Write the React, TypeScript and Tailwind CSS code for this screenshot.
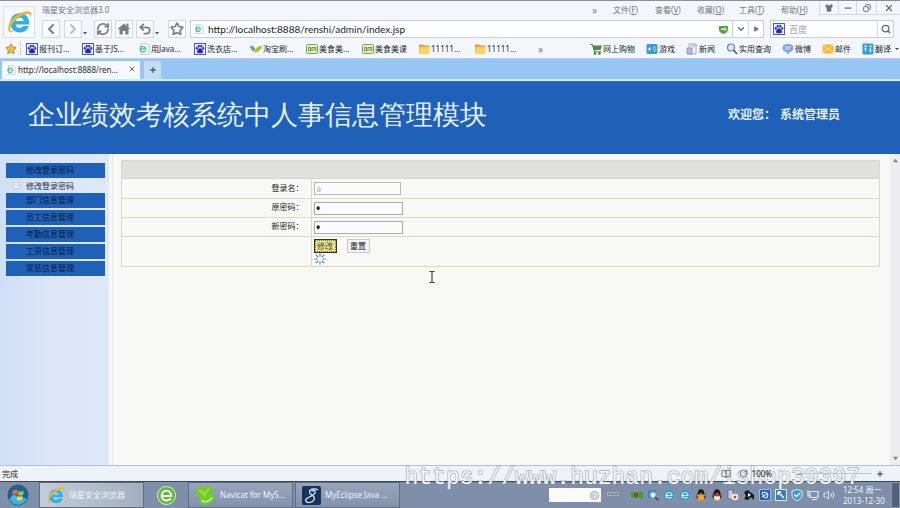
import type { ReactNode } from 'react';
import {
    BookOpen,
    ChevronDown,
    ChevronLeft,
    ChevronRight,
    Copy,
    Minus,
    Play,
    Plus,
    RotateCw,
    RefreshCw,
    Search,
    Shirt,
    Star,
    Undo2,
    Volume2,
    X,
} from 'lucide-react';

type IconName = 'baidu' | 'page' | 'leaf' | 'qm' | 'folder' | 'cart' | 'game' | 'news' | 'search' | 'weibo' | 'mail' | 'translate';

const bookmarks: { icon: IconName; label: string }[] = [
    { icon: 'baidu', label: '报刊订...' },
    { icon: 'baidu', label: '基于JS...' },
    { icon: 'page', label: '用Java...' },
    { icon: 'baidu', label: '洗衣店...' },
    { icon: 'leaf', label: '淘宝刷...' },
    { icon: 'qm', label: '美食美...' },
    { icon: 'qm', label: '美食美课' },
    { icon: 'folder', label: '11111...' },
    { icon: 'folder', label: '11111...' },
];

const shortcuts: { icon: IconName; label: string }[] = [
    { icon: 'cart', label: '网上购物' },
    { icon: 'game', label: '游戏' },
    { icon: 'news', label: '新闻' },
    { icon: 'search', label: '实用查询' },
    { icon: 'weibo', label: '微博' },
    { icon: 'mail', label: '邮件' },
    { icon: 'translate', label: '翻译' },
];

const menus = [
    ['文件', 'F'],
    ['查看', 'V'],
    ['收藏', 'O'],
    ['工具', 'T'],
    ['帮助', 'H'],
];

const modules = ['部门信息管理', '员工信息管理', '考勤信息管理', '工资信息管理', '奖惩信息管理'];

function BrowserLogo({ className }: { className?: string }) {
    return (
        <svg viewBox="0 0 24 24" className={className}>
            <path d="M21.500 14.200H8.800c.3 2 1.800 3.200 3.900 3.200 1.600 0 2.700-.6 3.400-1.700h4.900c-1.200 3.700-4.300 6-8.300 6C7.500 21.700 4 18.200 4 13s3.500-9 8.700-9c5.300 0 8.900 3.800 8.800 10.200zM8.900 11h7.500c-.3-1.800-1.700-2.900-3.700-2.900S9.300 9.200 8.900 11z" fill="#27b4e6" />
            <path d="M3 21C.5 18 3 10.800 9.500 6 15 2 21.500.8 23 3.300c.8 1.300.4 3.200-.8 5.200.4-1.700.3-2.800-.5-3.400-1.900-1.300-6.500.2-10.700 3.500C5.700 12.800 2.800 17.600 4.200 19.800c.5.800 1.700.9 3.300.5C5.500 21.600 3.900 22 3 21z" fill="#e9b63c" />
        </svg>
    );
}

function PageIcon({ className }: { className?: string }) {
    return (
        <svg viewBox="0 0 12 12" className={className}>
            <path d="M3 .5h6l2 2v9H3z" fill="#f7f9fa" stroke="#b3bec4" strokeWidth=".7" />
            <path d="M7.500 7.500a2.800 2.800 0 1 1 .3-1.600H2.800" fill="none" stroke="#43b9a0" strokeWidth="1.300" />
        </svg>
    );
}

function SiteIcon({ name }: { name: IconName }) {
    if (name === 'page') return <PageIcon className="size-3 shrink-0" />;
    return (
        <svg viewBox="0 0 12 12" className="size-3 shrink-0">
            {name === 'baidu' && (
                <>
                    <rect x=".5" y=".5" width="11" height="11" fill="#e9ecff" stroke="#4a58c8" />
                    <g fill="#2227c4">
                        <ellipse cx="2.800" cy="5.400" rx="1" ry="1.300" />
                        <ellipse cx="4.700" cy="3.200" rx="1" ry="1.400" />
                        <ellipse cx="7.300" cy="3.200" rx="1" ry="1.400" />
                        <ellipse cx="9.200" cy="5.400" rx="1" ry="1.300" />
                        <path d="M6 5.200c1.500 0 3 2.200 3 3.600S7.800 10.200 6 10.200 3 10.200 3 8.800 4.500 5.200 6 5.200z" />
                    </g>
                </>
            )}
            {name === 'leaf' && (
                <>
                    <path d="M0 3c3-1 5 1 5.500 5C3 9 .5 7 0 3z" fill="#5f9fb2" />
                    <path d="M5 9c0-4 3-6.500 7-6-1 4-3.500 6.500-7 6z" fill="#9ccb2e" />
                    <path d="M3 7c2 0 4 1 5 2-2 1.500-4 1-5-2z" fill="#efb93a" />
                </>
            )}
            {name === 'qm' && (
                <>
                    <rect x=".5" y="1.500" width="11" height="9" rx="1" fill="#e4eed0" stroke="#79a544" />
                    <path d="M2.500 4.500h2v3h-2zM4.500 8.500v-4M6 8V4.500h2V8M8 4.500h1.800V8" fill="none" stroke="#5d8d32" strokeWidth=".8" />
                </>
            )}
            {name === 'folder' && (
                <>
                    <path d="M1 1.500h4l1 1h5V11H1z" fill="#e2a13a" />
                    <path d="M1.500 4H12l-1 7H1z" fill="#fbd067" />
                </>
            )}
            {name === 'cart' && (
                <>
                    <path d="M0 1h2.500l.8 1.500H12L10.500 7H4.500L5 8.300h6v1H4L2 2H0z" fill="#4f8a45" />
                    <circle cx="5" cy="10.500" r="1.200" fill="#3c6f37" />
                    <circle cx="9.500" cy="10.500" r="1.200" fill="#3c6f37" />
                </>
            )}
            {name === 'game' && (
                <>
                    <rect x=".5" y="1" width="11" height="10" rx="1.500" fill="#3d9bd4" />
                    <path d="M2 6h3M3.500 4.500v3M8.500 3.500v1.500M8.500 7v1.500M7 6h.8M9.300 6h.8" stroke="#fff" strokeWidth="1.200" />
                </>
            )}
            {name === 'news' && (
                <>
                    <path d="M3 1h7v10H3z" fill="#eef1f7" stroke="#8b97b0" strokeWidth=".8" />
                    <path d="M1 5h5v6H1z" fill="#b3bdd4" stroke="#8390ac" strokeWidth=".8" />
                    <path d="M5 3h4" stroke="#8b97b0" strokeWidth=".8" />
                </>
            )}
            {name === 'search' && (
                <>
                    <circle cx="5" cy="4.500" r="3.500" fill="#dcebfa" stroke="#5b83b8" strokeWidth="1.200" />
                    <path d="m7.500 7 3.500 4" stroke="#51617c" strokeWidth="1.800" />
                </>
            )}
            {name === 'weibo' && (
                <>
                    <path d="M6 1c3.300 0 5.500 1.600 5.500 4S9.300 9 7.500 9.200L6 12 5 9.200C2.500 9 .5 7.500.5 5S2.700 1 6 1z" fill="#7ba6db" />
                    <path d="M3 4h6M3 6h5" stroke="#dfeafa" />
                </>
            )}
            {name === 'mail' && (
                <>
                    <rect x=".5" y="1.500" width="11" height="9" fill="#f5b731" />
                    <path d="m1 2 5 4.500L11 2M1 10l3.500-4M11 10 7.500 6" fill="none" stroke="#fff0bd" strokeWidth=".9" />
                </>
            )}
            {name === 'translate' && (
                <>
                    <rect x=".5" y=".5" width="11" height="11" rx="1" fill="#2f9bd3" />
                    <path d="M2 3h3M3.500 2v7M2 6h3M6.500 3h3.500L7 6M8.500 5v5M6.500 7.500h4" fill="none" stroke="#d5f0ff" strokeWidth=".9" />
                </>
            )}
        </svg>
    );
}

function ToolButton({ label, children }: { label: string; children: ReactNode }) {
    return (
        <button aria-label={label} className="flex h-[18px] w-[18px] items-center justify-center border border-[#d5d8dd] bg-[#fafbfc] text-[#7b7e83]">
            {children}
        </button>
    );
}

function SmallArrow() {
    return (
        <svg viewBox="0 0 6 6" className="mt-2 h-[6px] w-[6px]">
            <path d="M1 2h4L3 4.500z" fill="#555" />
        </svg>
    );
}

function BrowserHeader() {
    return (
        <header className="border-t border-[#8d9096] bg-[#f3f7fb]">
            <div className="flex">
                <div className="mt-[5px] ml-[3px] flex h-8 w-8 items-center justify-center border border-[#dcdfe4] bg-[#f8fafc]">
                    <BrowserLogo className="size-[26px]" />
                </div>
                <div className="min-w-0 flex-1 pl-[7px]">
                    <div className="flex h-[19px] text-[8px] text-[#74777c]">
                        <span className="pt-[3px]">瑞星安全浏览器3.0</span>
                        <nav className="ml-auto flex gap-4 pt-[3px]">
                            <span className="text-[10px] leading-3 text-[#888]">»</span>
                            {menus.map(([name, key]) => (
                                <a key={key} href="#" className="w-[26px] whitespace-nowrap">
                                    {name}(<u>{key}</u>)
                                </a>
                            ))}
                        </nav>
                        <div className="ml-3 flex h-[14px] border-b border-l border-[#d3d7dd] text-[#6c6f74]">
                            <button aria-label="皮肤" className="flex w-[18px] items-center justify-center">
                                <Shirt className="size-2 fill-current" />
                            </button>
                            <button aria-label="最小化" className="flex w-[18px] items-center justify-center border-l border-[#d3d7dd]">
                                <Minus className="size-[10px]" strokeWidth={3} />
                            </button>
                            <button aria-label="还原" className="flex w-[20px] items-center justify-center border-l border-[#d3d7dd]">
                                <Copy className="size-2 rotate-90" strokeWidth={3} />
                            </button>
                            <button aria-label="关闭" className="flex w-[24px] items-center justify-center border-l border-[#d3d7dd]">
                                <X className="size-[10px]" strokeWidth={3} />
                            </button>
                        </div>
                    </div>
                    <div className="flex h-[18px] pr-[6px]">
                        <ToolButton label="后退">
                            <ChevronLeft className="size-4" strokeWidth={3} />
                        </ToolButton>
                        <div className="ml-1 flex w-[26px] items-center [&>button]:text-[#b9bcc1]">
                            <ToolButton label="前进">
                                <ChevronRight className="size-4" strokeWidth={3} />
                            </ToolButton>
                            <SmallArrow />
                        </div>
                        <div className="ml-1 flex gap-[3px]">
                            <ToolButton label="刷新">
                                <RefreshCw className="size-[14px]" strokeWidth={3} />
                            </ToolButton>
                            <ToolButton label="主页">
                                <svg viewBox="0 0 14 14" className="size-[14px]">
                                    <path d="M9.500 1.500h2v3h-2z" fill="currentColor" />
                                    <path d="M.5 7 7 1.500 13.500 7h-2v5.500h-3.200V9H5.700v3.500H2.500V7z" fill="currentColor" />
                                </svg>
                            </ToolButton>
                            <div className="flex items-center">
                                <ToolButton label="撤销">
                                    <Undo2 className="size-[14px]" strokeWidth={3} />
                                </ToolButton>
                                <SmallArrow />
                            </div>
                        </div>
                        <div className="ml-2">
                            <ToolButton label="收藏">
                                <Star className="size-[14px]" strokeWidth={3} />
                            </ToolButton>
                        </div>
                        <div className="ml-1 flex min-w-0 flex-1 items-center border border-[#c9ced5] bg-[#fdfdfd]">
                            <PageIcon className="ml-[3px] size-[10px]" />
                            <input
                                aria-label="地址"
                                defaultValue="http://localhost:8888/renshi/admin/index.jsp"
                                className="ml-1 h-4 min-w-0 flex-1 bg-transparent font-[Lato,sans-serif] text-[10px] text-[#1f1f1f] outline-none"
                            />
                            <svg viewBox="0 0 10 10" className="mr-1 size-[9px]">
                                <path d="M0 1h10v4c0 2.500-2 4-5 5-3-1-5-2.500-5-5z" fill="#55a443" />
                                <path d="M2.500 4h4v-1.500l2 2.300-2 2.200V5.500h-4z" fill="#e9f7df" />
                            </svg>
                            <button aria-label="历史" className="flex h-4 w-4 items-center justify-center border-l border-[#c9ced5] text-[#666]">
                                <ChevronDown className="size-[10px]" strokeWidth={3} />
                            </button>
                            <button aria-label="转到" className="flex h-4 w-[15px] items-center justify-center border-l border-[#d9dce1] text-[#777]">
                                <Play className="size-[6px] fill-current" />
                            </button>
                        </div>
                        <div className="ml-[6px] flex w-[124px] items-center border border-[#c9ced5] bg-[#fdfdfd] pl-[2px]">
                            <SiteIcon name="baidu" />
                            <input aria-label="搜索" placeholder="百度" className="ml-1 h-4 min-w-0 flex-1 text-[9px] outline-none placeholder:text-[#a5a8ac]" />
                            <button aria-label="搜索" className="flex h-4 w-4 items-center justify-center border-l border-[#d9dce1] text-[#666]">
                                <Search className="size-[10px]" strokeWidth={3} />
                            </button>
                        </div>
                    </div>
                </div>
            </div>
            <div className="flex h-[21px] items-center border-b border-[#b9cfe4] pt-[2px] pr-[1px] pl-[5px] text-[8px] whitespace-nowrap text-[#26282b]">
                <Star className="size-3 fill-[#f0c040] text-[#a98a2c]" />
                <span className="mr-[5px] ml-[3px] h-3 border-l border-dotted border-[#b5bac2]" />
                {bookmarks.map((b, i) => (
                    <a key={i} href="#" className="flex w-14 items-center gap-px">
                        <SiteIcon name={b.icon} />
                        {b.label}
                    </a>
                ))}
                <span className="ml-2 text-[10px] text-[#777]">»</span>
                <div className="ml-auto flex items-center gap-[11px]">
                    {shortcuts.map((s) => (
                        <a key={s.label} href="#" className="flex items-center gap-px">
                            <SiteIcon name={s.icon} />
                            {s.label}
                        </a>
                    ))}
                </div>
                <svg viewBox="0 0 4 4" className="ml-1 size-1">
                    <path d="M0 1h4L2 3z" fill="#444" />
                </svg>
            </div>
            <div className="flex h-[22px] items-end border-b-2 border-[#cfe8fb] bg-[#98c6f4] pl-[2px]">
                <div className="flex h-[18px] w-[138px] items-center bg-[#f5f9fc] px-1 text-[8px] text-[#2b2b2b]">
                    <PageIcon className="size-[10px]" />
                    <span className="ml-[2px] flex-1">http://localhost:8888/ren...</span>
                    <button aria-label="关闭标签" className="mb-[2px] text-[#666]">
                        <X className="size-2" strokeWidth={3} />
                    </button>
                </div>
                <button aria-label="新标签" className="ml-1 flex h-[18px] w-[17px] items-center justify-center bg-[#c3dcf4] text-[#4d5a68]">
                    <Plus className="size-2" strokeWidth={4} />
                </button>
            </div>
        </header>
    );
}

function Banner() {
    return (
        <div className="flex h-[73px] shrink-0 items-center border-t border-[#3a71a8] bg-[#1f60b8] pr-[60px] pb-1 pl-7 text-[#e6f1fd]">
            <h1 className="font-serif text-[27px] font-light whitespace-nowrap">企业绩效考核系统中人事信息管理模块</h1>
            <p className="ml-auto flex gap-1 pb-[2px] text-[12px] font-bold whitespace-nowrap">
                <span>欢迎您：</span>
                <span>系统管理员</span>
            </p>
        </div>
    );
}

function Sidebar() {
    return (
        <aside className="w-[109px] shrink-0 bg-linear-to-r from-[#cfdff7] via-[#dce6f8] to-[#dfe8f9] pt-[9px] pr-1 pl-[6px] text-[8px] leading-3 text-[#0d1b40]">
            <button className="block h-[15px] w-full bg-[#1f60b8] pb-[2px] pl-5 text-left">修改登录密码</button>
            <a href="#" className="flex h-[15px] items-center pl-[7px] text-[#1f2c48]">
                <svg viewBox="0 0 7 7" className="mr-[6px] size-[7px]">
                    <path d="M.5.5h6v6h-6zM2 3.500h3" fill="#eef3fb" stroke="#c3cee0" />
                </svg>
                修改登录密码
            </a>
            <div className="flex flex-col gap-[2px]">
                {modules.map((m) => (
                    <button key={m} className="h-[15px] w-full bg-[#1f60b8] pb-[2px] pl-5 text-left">
                        {m}
                    </button>
                ))}
            </div>
        </aside>
    );
}

function Spinner() {
    return (
        <svg viewBox="0 0 12 12" className="size-3">
            <path d="M6 .5v3M6 8.500v3M.5 6h3M8.500 6h3M1.800 1.800l2.400 2.400M7.800 7.800l2.400 2.400M1.800 10.200l2.400-2.400M7.800 4.200l2.400-2.400" stroke="#3f7ed0" strokeWidth="1.200" />
        </svg>
    );
}

function PasswordForm() {
    const label = 'border border-[#d9dcb8] pr-[7px] pb-[2px] text-right';
    const cell = 'border border-[#d9dcb8] pl-[2px]';
    return (
        <form className="min-w-0 flex-1 pt-[6px] pr-[10px] pl-2" onSubmit={(e) => e.preventDefault()}>
            <table className="w-full border-collapse border border-[#d9dcb8] text-[8px] leading-3 text-[#1c1c1c]">
                <tbody>
                    <tr className="h-[18px] bg-[#e0e0df]">
                        <td colSpan={2} className="border border-[#d9dcb8]" />
                    </tr>
                    <tr className="h-5">
                        <td className={`${label} w-1/4`}>
                            <label htmlFor="login">登录名：</label>
                        </td>
                        <td className={cell}>
                            <input id="login" disabled defaultValue="a" className="block h-[13px] w-[87px] border border-[#b5b8bd] bg-[#fbfbfb] px-[2px] text-[#a9a9a9]" />
                        </td>
                    </tr>
                    <tr className="h-[19px]">
                        <td className={label}>
                            <label htmlFor="old">原密码：</label>
                        </td>
                        <td className={cell}>
                            <input id="old" type="password" defaultValue="a" className="block h-[13px] w-[89px] border border-[#a9acb2] bg-[#fbfbfb] px-px text-[14px] leading-[11px]" />
                        </td>
                    </tr>
                    <tr className="h-[19px]">
                        <td className={label}>
                            <label htmlFor="new">新密码：</label>
                        </td>
                        <td className={cell}>
                            <input id="new" type="password" defaultValue="a" className="block h-[13px] w-[89px] border border-[#a9acb2] bg-[#fbfbfb] px-px text-[14px] leading-[11px]" />
                        </td>
                    </tr>
                    <tr className="h-[30px]">
                        <td className={label} />
                        <td className={cell}>
                            <div className="flex gap-[10px]">
                                <button type="submit" className="h-[14px] w-[23px] border border-[#333] bg-[#e6e492] text-[8px] leading-[10px] whitespace-nowrap text-[#55552a] outline-1 -outline-offset-2 outline-dotted outline-[#77763c]">
                                    修改
                                </button>
                                <button type="reset" className="h-[14px] w-[23px] border border-[#c9c9cd] bg-[#f3f3f5] text-[8px] leading-[10px] whitespace-nowrap">
                                    重置
                                </button>
                            </div>
                            <Spinner />
                        </td>
                    </tr>
                </tbody>
            </table>
        </form>
    );
}

function TaskItem({ children, active }: { children: ReactNode; active?: boolean }) {
    return (
        <button
            className={`flex w-[105px] items-center gap-1 overflow-hidden border border-[#5f6d84] pl-[6px] text-[8px] whitespace-nowrap text-[#eef3fa] ${
                active ? 'bg-linear-to-r from-[#c3ccd8] to-[#a3afc0]' : 'bg-linear-to-b from-[#98a6bc] to-[#8392ab]'
            }`}
        >
            {children}
        </button>
    );
}

function Penguin({ scarf, body }: { scarf: string; body: string }) {
    return (
        <svg viewBox="0 0 12 12" className="size-3">
            <ellipse cx="6" cy="7" rx="4.500" ry="4.500" fill="#1d1d1f" />
            <ellipse cx="6" cy="3.500" rx="3" ry="3.300" fill="#1d1d1f" />
            <ellipse cx="6" cy="8.500" rx="3.200" ry="3" fill={body} />
            <path d="M2 5.500h8v1.800H2z" fill={scarf} />
            <path d="M4.500 4h3L6 5z" fill="#f0a020" />
            <path d="M2 10.500h3.500v1.300H2zM6.500 10.500H10v1.300H6.500z" fill="#f0a020" />
        </svg>
    );
}

function BlueSwirl() {
    return (
        <svg viewBox="0 0 12 12" className="size-3">
            <circle cx="6" cy="6" r="5" fill="#2d9ad9" />
            <path d="M3 6.500h6C9 4.500 7.500 3.500 6 3.500S3 4.700 3 6.300 4.500 9 6 9s2-.4 2.500-1" fill="none" stroke="#d6f0ff" strokeWidth="1.200" />
        </svg>
    );
}

function Tray() {
    return (
        <div className="flex items-center gap-1">
            <svg viewBox="0 0 12 12" className="mr-2 size-3">
                <path d="M0 3h12v4H0z" fill="#a5aeb2" />
                <path d="M1 5h2M4 5h3M8 5h3" stroke="#4d6b50" />
            </svg>
            <svg viewBox="0 0 12 12" className="size-3">
                <path d="M0 3h9l3-1v8l-3-1H0z" fill="#37a23c" />
                <circle cx="5" cy="6" r="2.200" fill="#bd2f20" />
            </svg>
            <svg viewBox="0 0 12 12" className="size-3">
                <path d="M1 1h8v8H1z" fill="#3c86d8" />
                <circle cx="6" cy="6" r="3" fill="#e0f0fb" stroke="#6aa6d8" />
                <path d="m8 8 3.500 3.500" stroke="#33527c" strokeWidth="1.600" />
            </svg>
            <BlueSwirl />
            <BlueSwirl />
            <Penguin scarf="#f0a028" body="#f2a73c" />
            <Penguin scarf="#d42b20" body="#f4f4f4" />
            <svg viewBox="0 0 12 12" className="size-3">
                <path d="M1 1h5v9H1z" fill="#c7cdd6" stroke="#586275" strokeWidth=".7" />
                <circle cx="8" cy="8" r="3.300" fill="#f5f5f5" />
                <circle cx="8" cy="8" r="1.500" fill="#d03a35" />
            </svg>
            <svg viewBox="0 0 12 12" className="size-3">
                <path d="M1 3l4-2 2 2 4 3v5L8 8l-3 3-4-1 2-3z" fill="#17191c" />
                <path d="M5 4l3 2-3 2z" fill="#fff" />
            </svg>
            <svg viewBox="0 0 12 12" className="size-3">
                <path d="M.5.5h11v11H.5z" fill="#2563b8" stroke="#a9c8ee" strokeWidth=".8" />
                <path d="M3 4l3-1 3 2-1 4-3-1zM3 8l6-4" fill="none" stroke="#fff" />
            </svg>
            <svg viewBox="0 0 12 12" className="size-3">
                <path d="M.5.5h11v11H.5z" fill="#3a7fc0" stroke="#dce9f6" />
                <path d="m3 3 6 6M3 3v3M3 3h3" stroke="#fff" strokeWidth="1.500" />
            </svg>
            <svg viewBox="0 0 12 12" className="size-3">
                <path d="M6 .5 11 2v4c0 3-2 4.500-5 5.800C3 10.500 1 9 1 6V2z" fill="#3a9bd8" stroke="#d8ecfa" />
                <path d="m3.500 5.500 2 2 3.500-3.500" fill="none" stroke="#fff" strokeWidth="1.400" />
            </svg>
            <svg viewBox="0 0 12 12" className="size-3">
                <path d="M3 2.500h8v6H3zM5 10.500h5M1 1v6h2" fill="none" stroke="#e5eaf2" strokeWidth="1.200" />
            </svg>
            <Volume2 className="size-3 text-[#e5eaf2]" />
        </div>
    );
}

function Taskbar() {
    return (
        <footer className="flex h-[27px] items-stretch border-t border-[#34445e] bg-[#7f8fa9]">
            <button aria-label="开始" className="flex w-[39px] items-center pl-[7px]">
                <svg viewBox="0 0 22 22" className="size-[22px]">
                    <circle cx="11" cy="11" r="10.500" fill="#245f92" />
                    <path d="M2 15a10 10 0 0 0 18 0c-5-3-13-3-18 0z" fill="#36b4d8" />
                    <path d="M6 6.500c2-1 3.500-.8 5 0l-1 4c-1.500-.8-3-.8-5 0z" fill="#ee6b35" />
                    <path d="M11.800 7c1.700.8 3.200.8 5.200 0l-1 4c-2 .8-3.500.8-5.200 0z" fill="#8fcf4a" />
                    <path d="M4.800 11.500c2-.8 3.500-.8 5 0l-1 4c-1.500-.8-3-.8-5 0z" fill="#5fb1ec" />
                    <path d="M10.600 12c1.700.8 3.200.8 5.200 0l-1 4c-2 .8-3.500.8-5.200 0z" fill="#fbd54a" />
                </svg>
            </button>
            <TaskItem active>
                <BrowserLogo className="size-[19px] shrink-0" />
                瑞星安全浏览器
            </TaskItem>
            <button aria-label="浏览器" className="flex w-11 items-center justify-center">
                <svg viewBox="0 0 20 20" className="size-[19px]">
                    <circle cx="10" cy="10" r="9.500" fill="#5fbd35" stroke="#d9f2c6" />
                    <path d="M5 10.500h10c0-3-2-5.500-5-5.500s-5 2.300-5 5.200S7 15.300 10 15.300c2 0 3.500-.8 4.500-2.300" fill="none" stroke="#fff" strokeWidth="2.200" />
                </svg>
            </button>
            <div className="flex gap-[2px]">
                <TaskItem>
                    <svg viewBox="0 0 22 22" className="size-[21px] shrink-0">
                        <path d="M1 5C3 2 7 1 9 4c1-4 5-4 7-2 3 1 3 4 2 6 3 2 3 6 0 9-3 4-9 5-12 2-2-1-2-4-1-6-3-1-5-4-4-8z" fill="#74c928" />
                        <path d="M3 6c3 0 6 2 7 5 1-3 3-6 6-7" fill="none" stroke="#a5e052" strokeWidth="1.500" />
                        <path d="M7 16c3 3 9 1 11-3" fill="none" stroke="#d8f7a8" strokeWidth="1.500" />
                    </svg>
                    Navicat for MyS...
                </TaskItem>
                <TaskItem>
                    <svg viewBox="0 0 20 20" className="size-[19px] shrink-0">
                        <rect width="20" height="20" rx="2" fill="#14335f" />
                        <path d="M17 4c-4-2-10-1-9 3 1 3 5 2 5 6 0 4-7 6-9 3-2-4 10-5 10-10 0-2-3-2-4 0" fill="none" stroke="#e8eef6" strokeWidth="1.300" />
                    </svg>
                    MyEclipse Java ...
                </TaskItem>
            </div>
            <div className="ml-auto flex items-center">
                <div className="mr-[6px] flex h-[14px] w-[52px] items-center justify-end bg-[#fbfbfb] pr-px">
                    <svg viewBox="0 0 12 12" className="size-[11px]">
                        <circle cx="6" cy="6" r="5.500" fill="#c9cbcd" />
                        <path d="M4 4h4v3H6v2" fill="none" stroke="#f2f2f2" />
                    </svg>
                </div>
                <Tray />
                <div className="ml-2 w-[46px] text-[8px] leading-[11px] whitespace-nowrap text-[#eef3fa]">
                    <p>12:54 周一</p>
                    <p>2013-12-30</p>
                </div>
                <span className="ml-[2px] h-[26px] w-[9px] border border-[#8a97ab] bg-[#53627b]" />
            </div>
        </footer>
    );
}

export default function App() {
    return (
        <div className="relative flex min-h-screen flex-col bg-[#f7f7f7] font-['Noto_Sans','Noto_Sans_CJK_SC',sans-serif]">
            <BrowserHeader />
            <Banner />
            <main className="flex flex-1">
                <Sidebar />
                <div className="ml-[3px] flex flex-1 border-l border-[#e3e6ea] bg-[#f8f8f7]">
                    <PasswordForm />
                    <div className="flex w-[10px] flex-col items-center justify-between bg-[#ededef] py-1 text-[#808287]">
                        <svg viewBox="0 0 6 6" className="size-[5px]">
                            <path d="M0 5h6L3 1z" fill="currentColor" />
                        </svg>
                        <svg viewBox="0 0 6 6" className="size-[5px]">
                            <path d="M0 1h6L3 5z" fill="currentColor" />
                        </svg>
                    </div>
                </div>
            </main>
            <div className="flex h-4 items-center border-t border-[#a8c4e0] bg-[#eff2f6] pr-4 pl-[2px] text-[8px] text-[#222]">
                <span>完成</span>
                <div className="relative z-10 ml-auto flex items-center text-[#55585d]">
                    <BookOpen className="size-[10px]" />
                    <RotateCw className="ml-2 size-[9px]" />
                    <span className="ml-1 text-[#222]">100%</span>
                    <Minus className="ml-6 size-2" />
                    <span className="h-px w-[68px] bg-[#a9cfe0]" />
                    <Plus className="ml-1 size-2" strokeWidth={4} />
                </div>
            </div>
            <Taskbar />
            <svg viewBox="0 0 6 12" className="pointer-events-none absolute top-[271px] left-[429px] h-3 w-[6px]">
                <path d="M.5.5h2l.5.500.5-.5h2M3 1v10M.5 11.500h2l.5-.5.5.5h2" fill="none" stroke="#222" />
            </svg>
            <p className="pointer-events-none absolute right-10 bottom-4 font-['Liberation_Mono',monospace] text-[23px] leading-7 text-[#f1f3f5] [paint-order:stroke] [-webkit-text-stroke:1px_#8f949b]">
                https://www.huzhan.com/ishop39397
            </p>
        </div>
    );
}
